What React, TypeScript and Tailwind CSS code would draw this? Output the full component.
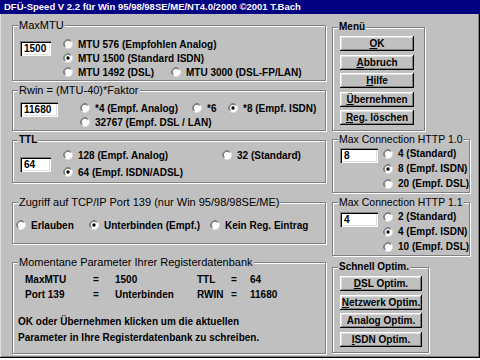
import type { ReactNode } from "react";

const raised =
  "bg-[#c0c0c0] shadow-[inset_-1px_-1px_0_#000,inset_1px_1px_0_#fff,inset_-2px_-2px_0_#808080,inset_2px_2px_0_#dfdfdf]";
const sunken =
  "bg-white shadow-[inset_1px_1px_0_#808080,inset_2px_2px_0_#000,inset_-1px_-1px_0_#fff,inset_-2px_-2px_0_#dfdfdf]";

function Group({
  title,
  titleClass = "text-[11px] font-normal",
  className,
  children,
}: {
  title: string;
  titleClass?: string;
  className: string;
  children: ReactNode;
}) {
  return (
    <div
      className={`relative shrink-0 border border-[#808080] shadow-[inset_1px_1px_0_#fff,1px_1px_0_#fff] ${className}`}
    >
      <span
        className={`absolute -top-[7px] left-[5px] bg-[#c0c0c0] px-[1px] leading-[12px] whitespace-nowrap ${titleClass}`}
      >
        {title}
      </span>
      {children}
    </div>
  );
}

function RadioIcon({ checked }: { checked?: boolean }) {
  return (
    <svg width="10" height="10" viewBox="0 0 12 12" className="shrink-0">
      <circle cx="6" cy="6" r="5.5" fill="#fff" stroke="#dfdfdf" />
      <path d="M2.1 9.9 A5.5 5.5 0 0 1 9.9 2.1" fill="none" stroke="#808080" />
      <path d="M2.8 9.2 A4.5 4.5 0 0 1 9.2 2.8" fill="none" stroke="#404040" />
      {checked && <circle cx="6" cy="6" r="2" fill="#000" />}
    </svg>
  );
}

function Radio({
  label,
  checked,
  className = "",
}: {
  label: string;
  checked?: boolean;
  className?: string;
}) {
  return (
    <div className={`flex h-[14px] items-center whitespace-nowrap ${className}`}>
      <RadioIcon checked={checked} />
      <span className="ml-[5px]">{label}</span>
    </div>
  );
}

function Edit({ value, className }: { value: string; className: string }) {
  return (
    <div className={`${sunken} flex shrink-0 items-center pl-[4px] ${className}`}>
      {value}
    </div>
  );
}

function Button({ children, className }: { children: ReactNode; className: string }) {
  return (
    <div className={`${raised} flex h-[15px] items-center justify-center ${className}`}>
      {children}
    </div>
  );
}

const U = ({ children }: { children: ReactNode }) => (
  <span className="underline underline-offset-1">{children}</span>
);

export default function App() {
  return (
    <div className="h-[358px] w-[480px] overflow-hidden bg-[#c0c0c0] font-['Liberation_Sans',Arial,sans-serif] text-[10px] font-bold text-black shadow-[inset_-1px_-1px_0_#000,inset_1px_1px_0_#dfdfdf,inset_-2px_-2px_0_#808080]">
      <div className="h-[14px] bg-[#000080] pl-[4px] text-[9.5px] leading-[14px] text-white whitespace-nowrap">
        DFÜ-Speed V 2.2 für Win 95/98/98SE/ME/NT4.0/2000 ©2001 T.Bach
      </div>

      <div className="flex pl-[12px] pt-[11px]">
        {/* left column */}
        <div className="flex w-[314px] flex-col">
          <Group title="MaxMTU" className="h-[56px]">
            <div className="flex pl-[7px] pt-[11px]">
              <Edit value="1500" className="mt-[4px] h-[15px] w-[31px]" />
              <div className="ml-[12px] flex flex-col">
                <Radio label="MTU 576 (Empfohlen Analog)" />
                <Radio label="MTU 1500 (Standard ISDN)" checked />
                <div className="flex">
                  <Radio label="MTU 1492 (DSL)" className="w-[108px]" />
                  <Radio label="MTU 3000 (DSL-FP/LAN)" />
                </div>
              </div>
            </div>
          </Group>

          <Group title="Rwin = (MTU-40)*Faktor" className="mt-[9px] h-[41px]">
            <div className="flex pl-[7px] pt-[10px]">
              <Edit value="11680" className="mt-[1px] h-[15px] w-[38px]" />
              <div className="ml-[22px] flex flex-col">
                <div className="flex">
                  <Radio label="*4 (Empf. Analog)" className="w-[112px]" />
                  <Radio label="*6" className="w-[36px]" />
                  <Radio label="*8 (Empf. ISDN)" checked />
                </div>
                <Radio label="32767 (Empf. DSL / LAN)" />
              </div>
            </div>
          </Group>

          <Group title="TTL" titleClass="font-bold" className="mt-[9px] h-[43px]">
            <div className="flex pl-[7px] pt-[7px]">
              <Edit value="64" className="mt-[9px] h-[15px] w-[31px]" />
              <div className="ml-[12px] flex flex-col gap-[3px]">
                <div className="flex">
                  <Radio label="128 (Empf. Analog)" className="w-[159px]" />
                  <Radio label="32 (Standard)" />
                </div>
                <Radio label="64 (Empf. ISDN/ADSL)" checked />
              </div>
            </div>
          </Group>

          <Group title="Zugriff auf TCP/IP Port 139 (nur Win 95/98/98SE/ME)" className="mt-[19px] h-[42px]">
            <div className="flex pl-[3px] pt-[15px]">
              <Radio label="Erlauben" className="w-[73px]" />
              <Radio label="Unterbinden (Empf.)" checked className="w-[121px]" />
              <Radio label="Kein Reg. Eintrag" />
            </div>
          </Group>

          <Group title="Momentane Parameter Ihrer Registerdatenbank" className="mt-[18px] h-[92px]">
            <div className="grid grid-cols-[68px_22px_82px_34px_19px_auto] pl-[12px] pt-[9px] leading-[15px]">
              <span>MaxMTU</span>
              <span>=</span>
              <span>1500</span>
              <span>TTL</span>
              <span>=</span>
              <span>64</span>
              <span>Port 139</span>
              <span>=</span>
              <span>Unterbinden</span>
              <span>RWIN</span>
              <span>=</span>
              <span>11680</span>
            </div>
            <div className="pl-[5px] pt-[12px] leading-[16px]">
              <p>OK oder Übernehmen klicken um die aktuellen</p>
              <p>Parameter in Ihre Registerdatenbank zu schreiben.</p>
            </div>
          </Group>
        </div>

        {/* right column */}
        <div className="ml-[6px] flex flex-col">
          <Group title="Menü" titleClass="font-bold" className="mt-[2px] h-[104px] w-[93px]">
            <div className="flex flex-col gap-[3.5px] pl-[7px] pt-[8px]">
              <Button className="w-[74px]">
                <U>O</U>K
              </Button>
              <Button className="w-[74px]">
                <U>A</U>bbruch
              </Button>
              <Button className="w-[74px]">
                <U>H</U>ilfe
              </Button>
              <Button className="w-[74px]">
                <U>Ü</U>bernehmen
              </Button>
              <Button className="w-[74px]">
                <U>R</U>eg. löschen
              </Button>
            </div>
          </Group>

          <Group
            title="Max Connection HTTP 1.0"
            titleClass="text-[10.5px] font-normal"
            className="mt-[8px] h-[54px] w-[138px]"
          >
            <div className="flex pl-[7px] pt-[6px]">
              <Edit value="8" className="mt-[2px] h-[15px] w-[38px]" />
              <div className="ml-[5px] flex flex-col">
                <Radio label="4 (Standard)" className="h-[15px]" />
                <Radio label="8 (Empf. ISDN)" checked className="h-[15px]" />
                <Radio label="20 (Empf. DSL)" className="h-[15px]" />
              </div>
            </div>
          </Group>

          <Group
            title="Max Connection HTTP 1.1"
            titleClass="text-[10.5px] font-normal"
            className="mt-[9px] h-[54px] w-[138px]"
          >
            <div className="flex pl-[7px] pt-[6px]">
              <Edit value="4" className="mt-[3px] h-[15px] w-[38px]" />
              <div className="ml-[5px] flex flex-col">
                <Radio label="2 (Standard)" className="h-[15px]" />
                <Radio label="4 (Empf. ISDN)" checked className="h-[15px]" />
                <Radio label="10 (Empf. DSL)" className="h-[15px]" />
              </div>
            </div>
          </Group>

          <Group title="Schnell Optim." titleClass="font-bold" className="mt-[11px] h-[86px] w-[97px]">
            <div className="flex flex-col gap-[3.7px] pl-[7px] pt-[8px]">
              <Button className="w-[82px]">
                <U>D</U>SL Optim.
              </Button>
              <Button className="w-[82px]">
                <U>N</U>etzwerk Optim.
              </Button>
              <Button className="w-[82px]">Analog Optim.</Button>
              <Button className="w-[82px]">
                <U>I</U>SDN Optim.
              </Button>
            </div>
          </Group>
        </div>
      </div>
    </div>
  );
}
